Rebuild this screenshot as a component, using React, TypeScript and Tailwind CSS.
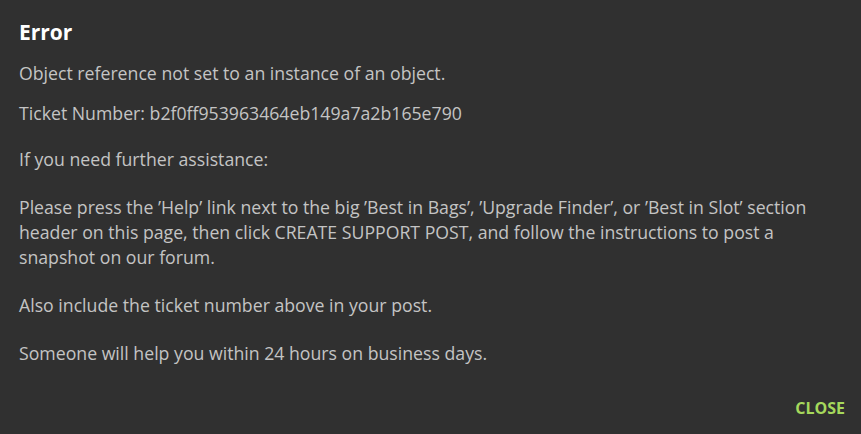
export default function App() {
  return (
    <div
      className="w-[861px] h-[434px] bg-[#303030] text-[#c4c4c4] flex flex-col pl-[19px] pr-[20px]"
      style={{ fontFamily: '"Open Sans", "Lato", sans-serif' }}
    >
      <h1 className="text-white font-bold text-[21px] leading-[24px] mt-[20px]">Error</h1>
      <p className="text-[17.7px] leading-[24px] mt-[17px]">Object reference not set to an instance of an object.</p>
      <p className="text-[17.7px] leading-[24px] mt-[16px]">Ticket Number: b2f0ff953963464eb149a7a2b165e790</p>
      <div className="text-[17.7px] leading-[25px] mt-[22px] flex flex-col gap-[23px]">
        <p>If you need further assistance:</p>
        <p>
          Please press the ’Help’ link next to the big ’Best in Bags’, ’Upgrade Finder’, or ’Best in Slot’ section
          header on this page, then click CREATE SUPPORT POST, and follow the instructions to post a snapshot on our
          forum.
        </p>
        <p>Also include the ticket number above in your post.</p>
        <p>Someone will help you within 24 hours on business days.</p>
      </div>
      <div className="flex justify-end mt-auto mb-[16px] -mr-[4px]">
        <button className="text-[#a5d85c] font-bold text-[16px] leading-[20px]">CLOSE</button>
      </div>
    </div>
  );
}
